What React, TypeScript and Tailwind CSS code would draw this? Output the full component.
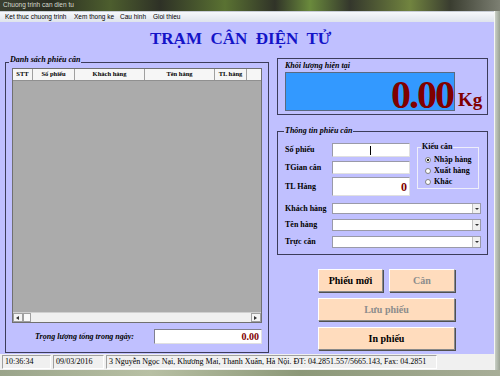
import React from "react";

const menus = [
  { label: "Ket thuc chuong trinh", w: "w-[69px]" },
  { label: "Xem thong ke", w: "w-[46px]" },
  { label: "Cau hinh", w: "w-[33px]" },
  { label: "Gioi thieu", w: "w-[40px]" },
];

const columns = [
  { label: "STT", w: "w-[20px]" },
  { label: "Số phiếu", w: "w-[42px]" },
  { label: "Khách hàng", w: "w-[70px]" },
  { label: "Tên hàng", w: "w-[70px]" },
  { label: "TL hàng", w: "w-[32px]" },
];

function TitleBar() {
  return (
    <div className="h-[11px] flex items-center pl-[3px] bg-[linear-gradient(90deg,#3b4030_0%,#2a2d22_10%,#4d5e2e_22%,#2e3126_32%,#5a7232_45%,#303328_55%,#6a8a3c_62%,#34372c_70%,#71843f_82%,#3a3d30_90%,#7c7f72_100%)]">
      <span className="font-['Liberation_Sans',sans-serif] text-[6.5px] leading-none text-[#d8dcd0]">
        Chuong trinh can dien tu
      </span>
    </div>
  );
}

function MenuBar() {
  return (
    <div className="h-[11px] flex items-center pl-[5px] bg-gradient-to-b from-[#f6f8fb] to-[#dfe4ec] border-t border-[#c8cdd6]">
      {menus.map((m) => (
        <span
          key={m.label}
          className={`${m.w} whitespace-nowrap font-['Liberation_Sans',sans-serif] text-[6.5px] leading-none text-black`}
        >
          {m.label}
        </span>
      ))}
    </div>
  );
}

function Arrow({ dir }: { dir: "left" | "right" | "down" }) {
  const pts =
    dir === "left" ? "4,1 1,3 4,5" : dir === "right" ? "1,1 4,3 1,5" : "1,2 5,2 3,4";
  return (
    <svg width="6" height="6" viewBox="0 0 6 6">
      <polygon points={pts} fill="#333" />
    </svg>
  );
}

function Table() {
  return (
    <div className="w-[250px] h-[255px] flex flex-col border border-[#707070]">
      <div className="h-[12px] flex bg-[#f6f6f6] border-b border-[#909090]">
        {columns.map((c) => (
          <div
            key={c.label}
            className={`${c.w} border-r border-[#a0a0a0] flex items-center justify-center text-[6.5px] font-bold leading-none whitespace-nowrap`}
          >
            {c.label}
          </div>
        ))}
        <div className="flex-1" />
      </div>
      <div className="flex-1 bg-[#ababab]" />
      <div className="h-[10px] flex bg-[#f0f0f0] border-t border-[#d0d0d0]">
        <div className="w-[10px] flex items-center justify-center border border-[#a0a0a0] bg-[#f4f4f4]">
          <Arrow dir="left" />
        </div>
        <div className="w-[8px] border border-[#a0a0a0] bg-[#fafafa]" />
        <div className="flex-1" />
        <div className="w-[10px] flex items-center justify-center border border-[#a0a0a0] bg-[#f4f4f4]">
          <Arrow dir="right" />
        </div>
      </div>
    </div>
  );
}

function TextBox({ h, children }: { h: string; children?: React.ReactNode }) {
  return (
    <div
      className={`${h} w-[78px] bg-white border border-[#9a9aa8] border-b-[#e0e0e0] border-r-[#e0e0e0] flex items-center justify-end pr-[2px]`}
    >
      {children}
    </div>
  );
}

function Combo({ h }: { h: string }) {
  return (
    <div className={`${h} w-[149px] bg-white border border-[#9a9aa8] flex justify-end`}>
      <div className="w-[8px] bg-[#f0f0f0] border-l border-[#c0c0c0] flex items-center justify-center">
        <Arrow dir="down" />
      </div>
    </div>
  );
}

function Radio({ label, checked }: { label: string; checked?: boolean }) {
  return (
    <div className="h-[11px] flex items-center pl-[7px] gap-[3px]">
      <span className="w-[6px] h-[6px] rounded-full bg-white border border-[#808080] flex items-center justify-center">
        {checked && <span className="w-[2px] h-[2px] bg-[#202020]" />}
      </span>
      <span className="text-[8px] font-bold leading-none whitespace-nowrap">{label}</span>
    </div>
  );
}

function Btn({ label, disabled, w }: { label: string; disabled?: boolean; w: string }) {
  return (
    <div
      className={`${w} h-[23px] bg-[#ffdcbd] border border-t-white border-l-white border-r-[#8a8a8a] border-b-[#8a8a8a] shadow-[1px_1px_0_#505050] flex items-center justify-center text-[10px] font-bold ${
        disabled ? "text-[#8c8c8c]" : "text-black"
      }`}
    >
      {label}
    </div>
  );
}

function StatusCell({ w, children }: { w: string; children: React.ReactNode }) {
  return (
    <div
      className={`${w} h-[14px] flex items-center pl-[2px] border border-t-[#a0a0a0] border-l-[#a0a0a0] border-r-white border-b-white overflow-hidden whitespace-nowrap text-[8px] leading-none`}
    >
      {children}
    </div>
  );
}

export default function App() {
  return (
    <div className="w-[500px] h-[376px] overflow-hidden flex flex-col font-['Liberation_Serif',serif] text-black">
      <TitleBar />
      <div className="flex flex-1 min-h-0">
        <div className="w-[494px] flex flex-col">
          <MenuBar />
          <main className="h-[332px] bg-[#c0c0ff] flex flex-col">
            <div className="h-[34px] pt-[8px] pl-[150px]">
              <h1 className="text-[17px] leading-[17px] font-bold text-[#1414c8] whitespace-pre">
                TRẠM  CÂN  ĐIỆN  TỬ
              </h1>
            </div>

            <div className="flex pl-[5px] gap-[8px]">
              {/* left: danh sach */}
              <div className="relative mt-[6px] w-[264px] h-[291px] border border-[#3c3c5a] pt-[5px] pl-[6px]">
                <span className="absolute -top-[8px] left-[3px] px-[1px] bg-[#c0c0ff] text-[8px] leading-[10px] italic font-bold">
                  Danh sách phiếu cân
                </span>
                <Table />
                <div className="mt-[6px] w-[250px] flex items-center justify-between pl-[23px]">
                  <span className="text-[8px] italic font-bold leading-none">
                    Trọng lượng tổng trong ngày:
                  </span>
                  <div className="w-[108px] h-[15px] bg-white border border-[#808090] border-b-[#e0e0e0] border-r-[#e0e0e0] flex items-center justify-end pr-[2px] text-[10px] font-bold text-[#800000] leading-none">
                    0.00
                  </div>
                </div>
              </div>

              {/* right */}
              <div className="w-[211px] flex flex-col">
                <div className="mt-[2px] h-[57px] border border-[#3c3c5a] pl-[7px] pt-[2px]">
                  <div className="text-[8px] leading-[9px] italic font-bold">Khối lượng hiện tại</div>
                  <div className="mt-[2px] flex items-end">
                    <div className="w-[170px] h-[39px] bg-[#3399ff] border border-[#5a6a80] flex items-end justify-end pr-[1px]">
                      <span className="text-[40px] leading-[30px] tracking-[-2px] font-bold text-[#800000]">
                        0.00
                      </span>
                    </div>
                    <span className="ml-[3px] pb-[2px] text-[19px] leading-none font-bold text-[#800000]">
                      Kg
                    </span>
                  </div>
                </div>

                <div className="relative mt-[16px] h-[124px] border border-[#3c3c5a] pt-[11px] pl-[7px]">
                  <span className="absolute -top-[6px] left-[6px] px-[1px] bg-[#c0c0ff] text-[8px] leading-[10px] italic font-bold">
                    Thông tin phiếu cân
                  </span>
                  <div className="flex">
                    <div className="flex flex-col">
                      <div className="flex items-center">
                        <span className="w-[47px] text-[8px] font-bold leading-none">Số phiếu</span>
                        <TextBox h="h-[14px]">
                          <span className="mr-[36px] w-px h-[9px] bg-black" />
                        </TextBox>
                      </div>
                      <div className="mt-[4px] flex items-center">
                        <span className="w-[47px] text-[8px] font-bold leading-none">TGian cân</span>
                        <TextBox h="h-[13px]" />
                      </div>
                      <div className="mt-[3px] flex items-center">
                        <span className="w-[47px] text-[8px] font-bold leading-none">TL Hàng</span>
                        <TextBox h="h-[19px]">
                          <span className="text-[12px] font-bold text-[#800000] leading-none">0</span>
                        </TextBox>
                      </div>
                    </div>
                    <div className="relative ml-[7px] mt-[4px] w-[62px] h-[42px] border border-[#eeeefa] pt-[6px]">
                      <span className="absolute -top-[6px] left-[3px] px-[1px] bg-[#c0c0ff] text-[8px] leading-[10px] font-bold">
                        Kiểu cân
                      </span>
                      <Radio label="Nhập hàng" checked />
                      <Radio label="Xuất hàng" />
                      <Radio label="Khác" />
                    </div>
                  </div>
                  <div className="mt-[7px] flex items-center">
                    <span className="w-[47px] text-[8px] font-bold leading-none whitespace-nowrap">Khách hàng</span>
                    <Combo h="h-[11px]" />
                  </div>
                  <div className="mt-[5px] flex items-center">
                    <span className="w-[47px] text-[8px] font-bold leading-none">Tên hàng</span>
                    <Combo h="h-[12px]" />
                  </div>
                  <div className="mt-[5px] flex items-center">
                    <span className="w-[47px] text-[8px] font-bold leading-none">Trực cân</span>
                    <Combo h="h-[12px]" />
                  </div>
                </div>

                <div className="mt-[14px] ml-[41px] flex flex-col gap-[6px]">
                  <div className="flex gap-[6px]">
                    <Btn w="w-[65px]" label="Phiếu mới" />
                    <Btn w="w-[66px]" label="Cân" disabled />
                  </div>
                  <Btn w="w-[137px]" label="Lưu phiếu" disabled />
                  <Btn w="w-[137px]" label="In phiếu" />
                </div>
              </div>
            </div>
          </main>
          <div className="h-[16px] bg-[#f0f0f0] flex items-center pl-[2px] gap-[2px]">
            <StatusCell w="w-[49px]">10:36:34</StatusCell>
            <StatusCell w="w-[51px]">09/03/2016</StatusCell>
            <StatusCell w="w-[331px]">
              3 Nguyễn Ngọc Nại, Khương Mai, Thanh Xuân, Hà Nội. ĐT: 04.2851.557/5665.143, Fax: 04.2851
            </StatusCell>
          </div>
        </div>
        <div className="w-[6px] border-l border-[#f4f6f4] bg-gradient-to-r from-[#c9cfc6] to-[#9aa294]" />
      </div>
      <div className="h-[6px] bg-[linear-gradient(90deg,#9aa48a,#b8c0a4_30%,#8c9878_60%,#a8ae98)]" />
    </div>
  );
}
